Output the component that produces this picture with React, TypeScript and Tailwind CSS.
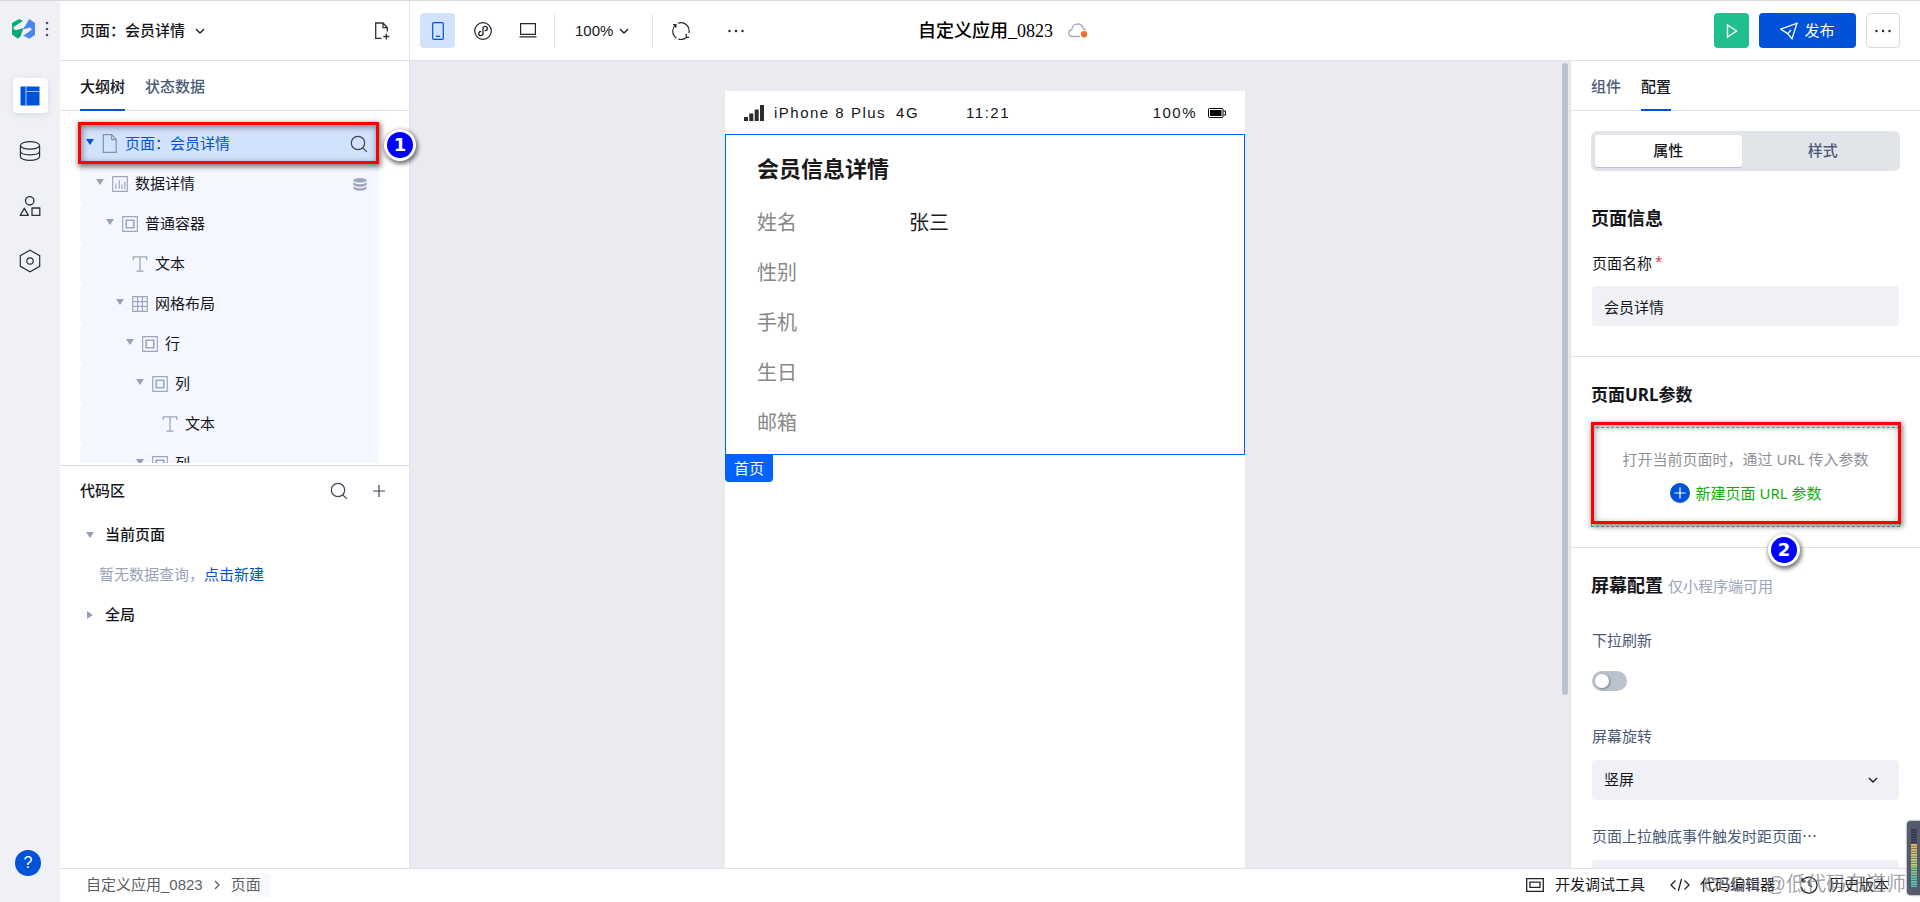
import React, { useState } from "react";

type IconProps = { className?: string };

const Chevron = ({ className = "" }: IconProps) => (
  <svg viewBox="0 0 12 12" className={"h-3 w-3 shrink-0 " + className} fill="none" stroke="currentColor" strokeWidth="1.3">
    <path d="M2 4l4 4 4-4" />
  </svg>
);

const SearchIcon = () => (
  <svg viewBox="0 0 18 18" className="h-[18px] w-[18px]" fill="none" stroke="#3d4556" strokeWidth="1.2">
    <circle cx="8" cy="8" r="6.7" />
    <path d="M12.8 12.8l4 4" />
  </svg>
);

const Dots = () => (
  <svg viewBox="0 0 18 4" className="h-1 w-[18px]" fill="#1c2029">
    <circle cx="2.5" cy="2" r="1.2" />
    <circle cx="9" cy="2" r="1.2" />
    <circle cx="15.5" cy="2" r="1.2" />
  </svg>
);

const Caret = ({ className = "" }: IconProps) => (
  <svg viewBox="0 0 8 6" className={"h-[6px] w-2 shrink-0 " + className} fill="currentColor">
    <path d="M0 0h8L4 6z" />
  </svg>
);

type Kind = "page" | "detail" | "box" | "text" | "grid";

const NodeIcon = ({ kind }: { kind: Kind }) => (
  <svg viewBox="0 0 16 16" className="h-4 w-4 shrink-0 overflow-visible" fill="none" stroke="#9ba7bd" strokeWidth="1.2">
    {kind === "page" && <path d="M1.3-1.4h8.500l4.400 4.900v12.900H1.300zM9.600-1.400v5h4.600" stroke="#8792a6" />}
    {kind === "detail" && (
      <>
        <path d="M.7.7h14.6v14.6H.7z" />
        <path d="M3.8 7.5v5.2M7.2 4v8.7M9.900 8.5v4.200M12.8 5.8v6.9" strokeWidth="1.2" />
      </>
    )}
    {kind === "box" && (
      <>
        <path d="M.7.7h14.6v14.6H.7z" />
        <path d="M4.2 4.2h7.6v7.6H4.2z" strokeWidth="1.6" />
      </>
    )}
    {kind === "text" && <path d="M1.2 4V.9h13.6V4M8 .9v14.2M4.4 15.2h7.2" strokeWidth="1.3" />}
    {kind === "grid" && <path d="M.7.7h14.6v14.6H.7zM5.6.7v14.6M10.4.7v14.6M.7 5.6h14.6M.7 10.4h14.6" />}
  </svg>
);

type TreeNode = { label: string; kind: Kind; pad: string; leaf?: boolean; data?: boolean };

const tree: TreeNode[] = [
  { label: "数据详情", kind: "detail", pad: "pl-[16px]", data: true },
  { label: "普通容器", kind: "box", pad: "pl-[26px]" },
  { label: "文本", kind: "text", pad: "pl-[36px]", leaf: true },
  { label: "网格布局", kind: "grid", pad: "pl-[36px]" },
  { label: "行", kind: "box", pad: "pl-[46px]" },
  { label: "列", kind: "box", pad: "pl-[56px]" },
  { label: "文本", kind: "text", pad: "pl-[66px]", leaf: true },
  { label: "列", kind: "box", pad: "pl-[56px]" },
];

const Badge = ({ n }: { n: number }) => (
  <span className="flex h-8 w-8 items-center justify-center rounded-full bg-white shadow-[1px_2px_4px_1px_rgba(0,0,0,0.55)]">
    <span className="flex h-[26px] w-[26px] items-center justify-center rounded-full bg-[#0000ff] font-['DejaVu_Sans','Noto_Sans_CJK_SC',sans-serif] text-[18px] leading-none font-bold text-white">
      {n}
    </span>
  </span>
);

function Rail() {
  return (
    <nav className="flex w-[60px] shrink-0 flex-col items-center bg-[#eff1f6]" aria-label="主导航">
      <div className="flex h-14 w-full items-center pl-3">
        <svg viewBox="0 0 23 20" className="h-5 w-[23px]">
          <path d="M7.300 0L11 2 1.500 8v2L4 11.300 11.500 9 8.500 17.500 6 19.700 0 15.500V4z" fill="#0aa872" />
          <path d="M17.300 0L23 4v12l-5.700 3.700-6-2.900L20 10.500l-2-2-7 2z" fill="#4a86f0" />
        </svg>
        <svg viewBox="0 0 4 16" className="ml-[10px] h-4 w-1" fill="#4b5265">
          <circle cx="2" cy="2" r="1.3" />
          <circle cx="2" cy="8" r="1.3" />
          <circle cx="2" cy="14" r="1.3" />
        </svg>
      </div>
      <div className="mt-[21px] flex flex-col items-center gap-5">
        <button aria-label="布局" className="flex h-[35px] w-[35px] items-center justify-center rounded bg-white shadow-[0_2px_6px_rgba(30,50,100,0.12)]">
          <svg viewBox="0 0 20 20" className="h-5 w-5">
            <path d="M.5.5h19v19H.5z" fill="#0052d9" />
            <path d="M6 .5v19M6 5.500h13.500" stroke="#a9c4f5" strokeWidth="1" />
          </svg>
        </button>
        <button aria-label="数据" className="flex h-[35px] w-[35px] items-center justify-center">
          <svg viewBox="0 0 22 20" className="h-5 w-[22px]" fill="none" stroke="#2b303b" strokeWidth="1.2">
            <ellipse cx="11" cy="4.4" rx="9.6" ry="3.8" />
            <path d="M1.4 4.4v11c0 2.200 4 4 9.600 4s9.600-1.800 9.600-4v-11M1.400 10c0 2.200 4 3.800 9.600 3.800s9.600-1.600 9.600-3.800" />
          </svg>
        </button>
        <button aria-label="组件库" className="flex h-[35px] w-[35px] items-center justify-center">
          <svg viewBox="0 0 22 20" className="h-5 w-[22px]" fill="none" stroke="#2b303b" strokeWidth="1.3">
            <circle cx="10.700" cy="4.800" r="4.200" />
            <path d="M5.300 12.300l4.100 7H1.200zM13 12h7.800v7.400H13z" strokeLinejoin="round" />
          </svg>
        </button>
        <button aria-label="设置" className="flex h-[35px] w-[35px] items-center justify-center">
          <svg viewBox="0 0 22 24" className="h-6 w-[22px]" fill="none" stroke="#2b303b" strokeWidth="1.2">
            <path d="M11 1.300l9.700 5.300v10.800L11 22.700l-9.700-5.300V6.600z" />
            <circle cx="11" cy="12" r="3.200" />
          </svg>
        </button>
      </div>
      <button className="mt-auto mr-1 mb-[26px] flex h-[26px] w-[26px] items-center justify-center rounded-full bg-[#0052d9] text-[16px] leading-none text-white" aria-label="帮助">
        ?
      </button>
    </nav>
  );
}

function LeftPanel() {
  return (
    <section className="flex w-[350px] shrink-0 flex-col border-r border-[#e0e4ea] bg-white">
      <header className="flex h-[60px] shrink-0 items-center border-b border-[#e0e4ea] pr-[18px] pl-5">
        <button className="flex items-center gap-[9px] font-medium">
          页面：会员详情
          <Chevron />
        </button>
        <button aria-label="新建页面" className="ml-auto">
          <svg viewBox="0 0 17 18" className="h-[18px] w-[17px]" fill="none" stroke="#2b303b" strokeWidth="1.3">
            <path d="M7.500 16.300H1.700V1H9l4.300 4.500v4M9 1v4.600h4.300M12.300 11.500v6M9.300 14.500h6" />
          </svg>
        </button>
      </header>
      <div role="tablist" className="flex h-[50px] shrink-0 gap-5 border-b border-[#e0e4ea] px-5 font-medium">
        <button role="tab" aria-selected="true" className="-mb-px border-b-2 border-[#0052d9] pt-[3px]">
          大纲树
        </button>
        <button role="tab" aria-selected="false" className="pt-[3px] text-[#4b5b76]">状态数据</button>
      </div>
      <div className="relative pt-[13px] pr-[30px] pl-5">
        <ul className="h-[339px] overflow-hidden">
          <li className="flex h-10 items-center gap-2 bg-[#d2e1fc] pr-[11px] pl-[6px] text-[#0052d9]">
            <Caret className="-mt-1" />
            <NodeIcon kind="page" />
            <span className="-ml-px">页面：会员详情</span>
            <button aria-label="搜索" className="ml-auto">
              <SearchIcon />
            </button>
          </li>
          {tree.map((n, i) => (
            <li key={i} className={"flex h-10 items-center gap-2 rounded bg-[#f4f7ff] pr-3 " + n.pad}>
              <Caret className={n.leaf ? "invisible" : "-mt-1 text-[#94a1b8]"} />
              <NodeIcon kind={n.kind} />
              <span className="-ml-px">{n.label}</span>
              {n.data && (
                <svg viewBox="0 0 14 13" className="ml-auto h-[13px] w-[14px]" fill="#9ba7bd">
                  <ellipse cx="7" cy="2.400" rx="6.600" ry="2.400" />
                  <path d="M.4 4.200c1.200 1.300 3.500 2 6.600 2s5.400-.7 6.600-2v2.500c-1 1.300-3.500 2.100-6.600 2.100S1.400 8 .4 6.700zM.4 8.300c1.200 1.300 3.500 2 6.600 2s5.400-.7 6.600-2v2.300C12.600 12 10.100 12.800 7 12.800S1.400 12 .4 10.600z" />
                </svg>
              )}
            </li>
          ))}
        </ul>
        <div className="pointer-events-none absolute top-[11px] right-[30px] left-[18px] h-[42px] border-[3px] border-[#ff0000] shadow-[1px_2px_5px_1px_rgba(0,0,0,0.5),inset_1px_2px_6px_rgba(0,0,0,0.45)]" />
        <div className="absolute top-[18px] -right-[7px] z-10">
          <Badge n={1} />
        </div>
      </div>
      <div className="mt-[2px] flex flex-1 flex-col border-t border-[#d5d9e0]">
        <div className="flex h-[49px] items-center pr-6 pl-5">
          <h2 className="font-medium">代码区</h2>
          <button aria-label="搜索代码" className="ml-auto">
            <SearchIcon />
          </button>
          <button aria-label="新建代码" className="ml-[25px]">
            <svg viewBox="0 0 12 12" className="h-3 w-3" stroke="#3d4556" strokeWidth="1.200">
              <path d="M0 6h12M6 0v12" />
            </svg>
          </button>
        </div>
        <button className="flex h-10 items-center gap-[11px] pl-[26px] font-medium">
          <Caret className="text-[#94a1b8]" />
          当前页面
        </button>
        <p className="flex h-10 items-center pl-[39px] text-[#97a3b7]">
          暂无数据查询，
          <a href="#new" className="text-[#0052d9]">点击新建</a>
        </p>
        <button className="flex h-10 items-center gap-[11px] pl-[26px] font-medium">
          <Caret className="-rotate-90 text-[#94a1b8]" />
          全局
        </button>
      </div>
    </section>
  );
}

function TopBar() {
  return (
    <header className="flex h-[60px] shrink-0 items-center border-b border-[#e0e4ea] bg-white px-[10px]">
      <div className="flex w-[498px] shrink-0 items-center">
        <button aria-label="手机" className="flex h-[35px] w-[35px] items-center justify-center rounded bg-[#d2e1fc]">
          <svg viewBox="0 0 12 18" className="h-[18px] w-3" fill="none" stroke="#0052d9" strokeWidth="1.200">
            <rect x=".7" y=".7" width="10.600" height="16.600" rx="1" />
            <path d="M4 14.300h4" />
          </svg>
        </button>
        <button aria-label="小程序" className="ml-[19px]">
          <svg viewBox="0 0 18 18" className="h-[18px] w-[18px]" fill="none" stroke="#20242d" strokeWidth="1.200">
            <circle cx="9" cy="9" r="8.300" />
            <path d="M10.800 8.700c1.300 0 2.500-1 2.500-2.300S12.300 4.300 11.200 4.300C9.900 4.300 9 5.200 9 6.400v5.200c0 1.200-.9 2.100-2.200 2.100S4.700 12.900 4.700 11.700s1.200-2.400 2.500-2.400" strokeWidth="1.300" />
          </svg>
        </button>
        <button aria-label="电脑" className="ml-[27px]">
          <svg viewBox="0 0 18 15" className="h-[15px] w-[18px]" fill="none" stroke="#20242d" strokeWidth="1.200">
            <path d="M1.600.7h14.800v10.600H1.600zM.5 13.900h17" />
          </svg>
        </button>
        <span className="ml-[17px] h-[34px] w-px bg-[#e0e4ea]" />
        <button className="ml-5 flex items-center gap-[5px]">
          100%
          <Chevron />
        </button>
        <span className="ml-[22px] h-[34px] w-px bg-[#e0e4ea]" />
        <button aria-label="刷新" className="ml-[19px]">
          <svg viewBox="0 0 18 18" className="h-[18px] w-[18px]" fill="none" stroke="#20242d" strokeWidth="1.200">
            <path d="M4.500 16A8.200 8.200 0 0 1 3.600 2.900M6 1.300A8.200 8.200 0 0 1 16.900 11M14 15.700a8.200 8.200 0 0 1-7.500 1.400M3.900 5.500V2.600H1.200M14.200 11.800v3.600h3" />
          </svg>
        </button>
        <button aria-label="更多工具" className="ml-[37px] flex h-6 items-center">
          <Dots />
        </button>
      </div>
      <div className="flex shrink-0 items-center gap-[15px]">
        <h1 className="font-['Liberation_Serif','Noto_Sans_CJK_SC',serif] text-[18px] font-medium text-black">自定义应用_0823</h1>
        <svg viewBox="0 0 20 15" className="h-[15px] w-5" fill="none" stroke="#a3adc2" strokeWidth="1.400">
          <path d="M12 13.500H4.500C2.300 13.500.8 12 .8 10.100c0-1.800 1.200-3 2.900-3.300C4 3.500 6.300 1 9.500 1c2.900 0 5.200 2 5.700 4.900 1.100.2 2 .7 2.600 1.500" />
          <circle cx="16" cy="11.200" r="3.200" fill="#f0702e" stroke="none" />
        </svg>
      </div>
      <div className="ml-auto flex items-center justify-end gap-[10px] pr-[10px]">
        <button aria-label="预览" className="flex h-[35px] w-[35px] items-center justify-center rounded bg-[#1fc08e]">
          <svg viewBox="0 0 12 14" className="h-[14px] w-3" fill="none" stroke="#fff" strokeWidth="1.400">
            <path d="M1.500 1v12l9-6z" />
          </svg>
        </button>
        <button className="flex h-[35px] w-[97px] items-center justify-center gap-[6px] rounded bg-[#0052d9] text-white">
          <svg viewBox="0 0 18 18" className="h-[18px] w-[18px]" fill="none" stroke="#fff" strokeWidth="1.300">
            <path d="M.8 7.200L17 1.200l-5 15.600-4.300-5.200zM7.700 11.600L11 8" />
          </svg>
          发布
        </button>
        <button aria-label="更多" className="flex h-[35px] w-[34px] items-center justify-center rounded border border-[#d6dae2]">
          <Dots />
        </button>
      </div>
    </header>
  );
}

const fields: [string, string][] = [
  ["姓名", "张三"],
  ["性别", ""],
  ["手机", ""],
  ["生日", ""],
  ["邮箱", ""],
];

function Canvas() {
  return (
    <main className="relative flex min-w-0 flex-1 justify-center bg-[#eaebf0] pt-[30px] pr-[10px]">
      <div className="flex w-[520px] flex-col bg-white">
        <div className="flex h-[43px] items-center pr-[19px] pl-[19px] tracking-widest text-[#14161b]">
          <svg viewBox="0 0 20 16" className="h-4 w-5" fill="#2b2b2b">
            <path d="M0 12h4v4H0zM5.300 8.500h4V16h-4zM10.700 4.500h4V16h-4zM16 0h4v16h-4z" />
          </svg>
          <span className="ml-[10px]">iPhone 8 Plus</span>
          <span className="ml-[10px]">4G</span>
          <span className="ml-[47px]">11:21</span>
          <span className="ml-auto">100%</span>
          <svg viewBox="0 0 18 10" className="ml-[11px] h-[10px] w-[18px]">
            <rect x=".5" y=".5" width="14.500" height="9" rx="1" fill="none" stroke="#000" />
            <path d="M2 2h11.500v6H2z" fill="#000" />
            <path d="M15.500 3h2v4h-2" fill="none" stroke="#000" />
          </svg>
        </div>
        <section className="border border-[#0062ff] px-[31px] pt-[9px] pb-[6px]">
          <h2 className="mb-[2px] flex h-[52px] items-center text-[22px] font-bold text-[#1a1a1a]">会员信息详情</h2>
          <dl>
            {fields.map(([k, v]) => (
              <div key={k} className="flex h-[50px] items-center text-[20px]">
                <dt className="w-[152px] text-[#888888]">{k}</dt>
                <dd className="text-[#1a1a1a]">{v}</dd>
              </div>
            ))}
          </dl>
        </section>
        <span className="flex h-[27px] w-12 items-center justify-center rounded-b bg-[#0062ff] text-white">首页</span>
      </div>
      <div className="absolute top-[2px] right-[2px] h-[632px] w-[6px] rounded-full bg-[#bac2cf]" />
    </main>
  );
}

function RightPanel() {
  const [tab, setTab] = useState("属性");
  return (
    <aside className="flex w-[350px] shrink-0 flex-col overflow-hidden border-l border-[#e0e4ea] bg-white">
      <div role="tablist" className="flex h-[50px] shrink-0 gap-5 border-b border-[#e0e4ea] px-5 font-medium">
        <button role="tab" aria-selected="false" className="pt-[3px] text-[#4b5b76]">组件</button>
        <button role="tab" aria-selected="true" className="-mb-px border-b-2 border-[#0052d9] pt-[3px]">
          配置
        </button>
      </div>
      <div className="relative h-0 flex-1 overflow-hidden">
        <div className="h-[246px] border-b border-[#e0e4ea] px-5 pt-5">
          <div className="flex h-10 gap-2 rounded-md bg-[#e1e5ea] p-1 font-medium">
            {["属性", "样式"].map((t) => (
              <button
                key={t}
                onClick={() => setTab(t)}
                className={
                  tab === t
                    ? "h-8 flex-1 rounded-[3px] bg-white shadow-[0_1px_1px_#b4bccb]"
                    : "h-8 flex-1 text-[#4b5b76]"
                }
              >
                {t}
              </button>
            ))}
          </div>
          <h3 className="mt-[34px] text-[18px] leading-7 font-bold">页面信息</h3>
          <label htmlFor="page-name" className="mt-[19px] block px-px leading-6">
            页面名称 <span className="-ml-px text-[18px] leading-none text-[#e34d59]">*</span>
          </label>
          <div className="px-px pt-[10px]">
            <input id="page-name" defaultValue="会员详情" className="block h-10 w-full rounded bg-[#eff1f6] px-3 outline-none" />
          </div>
        </div>
        <div className="h-[191px] border-b border-[#e0e4ea] px-5 pt-6 font-['Noto_Sans','Noto_Sans_CJK_SC',sans-serif]">
          <h3 className="text-[17px] leading-7 font-bold">页面URL参数</h3>
          <div className="relative mt-[18px] flex h-[100px] flex-col items-center border border-dashed border-[#a0a0a0] pt-[19px]">
            <p className="leading-6 text-[#8e9198]">打开当前页面时，通过 URL 传入参数</p>
            <button className="mt-[10px] flex items-center gap-[6px] leading-6 text-[#14ae0c]">
              <svg viewBox="0 0 20 20" className="h-5 w-5">
                <circle cx="10" cy="10" r="10" fill="#0052d9" />
                <path d="M4.500 10h11M10 4.500v11" stroke="#fff" strokeWidth="1.200" />
              </svg>
              新建页面 URL 参数
            </button>
            <div className="pointer-events-none absolute -top-[6px] -right-[2px] -left-px h-[102px] border-[3px] border-[#ff0000] shadow-[1px_2px_5px_1px_rgba(0,0,0,0.45),inset_1px_2px_6px_rgba(0,0,0,0.4)]" />
            <div className="absolute top-[106px] left-[176px] z-10">
              <Badge n={2} />
            </div>
          </div>
        </div>
        <div className="px-[21px] pt-6 text-[#4b5b76]">
          <h3 className="-ml-px text-[18px] leading-7 font-bold text-[#14161b]">
            屏幕配置 <small className="text-[15px] font-normal text-[#9aa5b8]">仅小程序端可用</small>
          </h3>
          <label htmlFor="pull" className="mt-[28px] block leading-6">下拉刷新</label>
          <input
            id="pull"
            type="checkbox"
            role="switch"
            className="mt-[18px] block h-5 w-[35px] appearance-none rounded-full bg-[#bac2cf] p-[3px] before:block before:h-[14px] before:w-[14px] before:rounded-full before:bg-white before:shadow-[1px_1px_3px_rgba(0,0,0,0.35)] checked:bg-[#0052d9] checked:before:translate-x-[15px]"
          />
          <label htmlFor="rotate" className="mt-[34px] block leading-6">屏幕旋转</label>
          <div className="relative mt-[11px] text-[#14161b]">
            <select id="rotate" className="block h-10 w-full appearance-none rounded bg-[#eff1f6] px-3">
              <option>竖屏</option>
              <option>横屏</option>
            </select>
            <Chevron className="pointer-events-none absolute top-[14px] right-5" />
          </div>
          <label htmlFor="reach" className="mt-[25px] block leading-6">页面上拉触底事件触发时距页面⋯</label>
          <input id="reach" className="mt-[11px] block h-10 w-full rounded bg-[#eff1f6] px-3" />
        </div>
      </div>
    </aside>
  );
}

function Footer() {
  return (
    <footer className="relative flex h-[34px] shrink-0 items-center border-t border-[#e0e4ea] bg-white pr-[31px] pb-[2px] pl-[26px]">
      <ol className="flex items-center gap-2 text-[#5c5f66]">
        <li>自定义应用_0823</li>
        <li aria-hidden="true">
          <Chevron className="-rotate-90" />
        </li>
        <li className="bg-gradient-to-r from-white to-[#f7f8fa] pr-[10px]">页面</li>
      </ol>
      <div className="ml-auto flex items-center gap-[25px]">
        <button className="flex items-center gap-[11px]">
          <svg viewBox="0 0 18 14" className="h-[14px] w-[18px]" fill="none" stroke="#20242d" strokeWidth="1.300">
            <path d="M.7.7h16.600v12.600H.7zM4 4.200h10v5.200H4z" />
          </svg>
          开发调试工具
        </button>
        <button className="flex items-center gap-[10px]">
          <svg viewBox="0 0 20 14" className="h-[14px] w-5" fill="none" stroke="#20242d" strokeWidth="1.300">
            <path d="M5.500 2.500L1 7l4.500 4.500M14.500 2.500L19 7l-4.500 4.500M11.500 1l-3.200 12" />
          </svg>
          代码编辑器
        </button>
        <button className="flex items-center gap-[11px]">
          <svg viewBox="0 0 18 18" className="h-[18px] w-[18px]" fill="none" stroke="#20242d" strokeWidth="1.200">
            <path d="M2.200 4.800A8 8 0 1 1 1.200 11M2 1.500v3.700h3.700M9 4.500V9l3.200 2" />
          </svg>
          历史版本
        </button>
      </div>
      <span className="pointer-events-none absolute top-px right-[14px] text-[20px] leading-7 whitespace-nowrap text-[#6b6f78]/65">CSDN @低代码布道师</span>
      <div className="absolute right-0 bottom-[7px] flex h-[74px] w-[13px] flex-col items-center justify-center rounded-l bg-[#555b6d] shadow-[0_0_2px_#333]">
        <svg viewBox="0 0 6 58" className="h-[58px] w-[6px]" strokeWidth="6" strokeDasharray="1.800 .7">
          <path d="M3 0v15" stroke="#343947" />
          <path d="M3 15v10" stroke="#e3c05a" />
          <path d="M3 25v12" stroke="#c5d267" />
          <path d="M3 37v10" stroke="#83cf86" />
          <path d="M3 47v11" stroke="#52cfae" />
        </svg>
      </div>
    </footer>
  );
}

export default function App() {
  return (
    <div className="flex h-screen overflow-hidden border-t border-[#d9dadd] bg-white font-['Liberation_Sans','Noto_Sans_CJK_SC',sans-serif] text-[15px] leading-6 text-[#14161b]">
      <Rail />
      <div className="flex min-w-0 flex-1 flex-col">
        <div className="flex min-h-0 flex-1">
          <LeftPanel />
          <div className="flex min-w-0 flex-1 flex-col">
            <TopBar />
            <div className="flex min-h-0 flex-1">
              <Canvas />
              <RightPanel />
            </div>
          </div>
        </div>
        <Footer />
      </div>
    </div>
  );
}
